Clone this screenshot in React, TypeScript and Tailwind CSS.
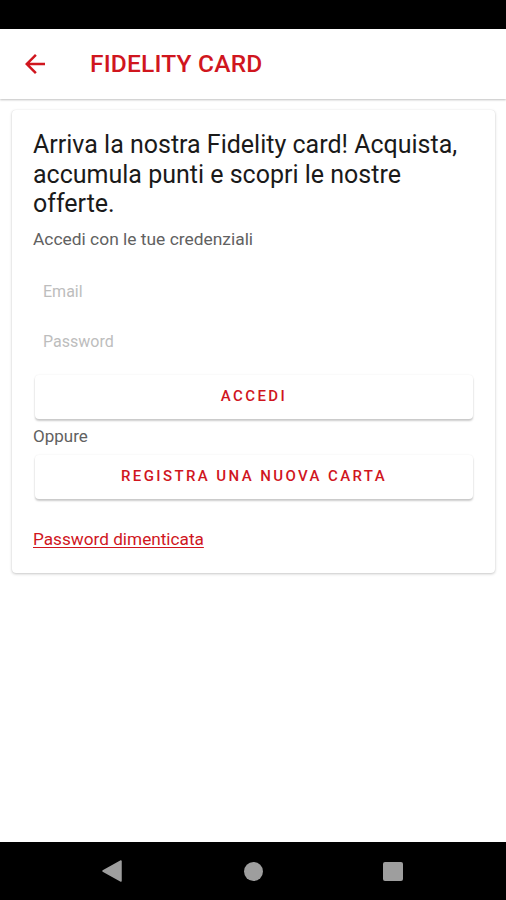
import React from "react";

const RED = "text-[#d0161e]";

export default function App() {
  return (
    <div className="w-[506px] h-[900px] flex flex-col bg-white overflow-hidden" style={{ fontFamily: "Roboto, 'Noto Sans', sans-serif" }}>
      <div className="h-[29px] bg-black shrink-0" />
      <header className="h-[70px] shrink-0 bg-white flex items-center shadow-[0_1px_2px_rgba(0,0,0,0.25)] z-10">
        <svg width="30" height="30" viewBox="0 0 24 24" className="ml-[20px] fill-[#d0161e]">
          <path d="M20 11H7.83l5.59-5.59L12 4l-8 8 8 8 1.41-1.41L7.83 13H20v-2z" />
        </svg>
        <h1 className={`ml-[40px] text-[24.5px] font-medium leading-none tracking-[0.2px] ${RED}`}>FIDELITY CARD</h1>
      </header>
      <main className="flex-1 pt-[11px] pl-[12px] pr-[11px]">
        <div className="rounded-[4px] bg-white shadow-[0_1px_3px_rgba(0,0,0,0.22),0_0_1px_rgba(0,0,0,0.1)] pt-[20px] pl-[21px] pr-[21px] pb-[23px]">
          <p className="text-[25px] leading-[29.5px] text-[#1a1a1a]">
            Arriva la nostra Fidelity card! Acquista, accumula punti e scopri le nostre offerte.
          </p>
          <p className="mt-[10px] text-[17.4px] leading-[20px] text-[#616161]">Accedi con le tue credenziali</p>
          <div className="mt-[18px] flex flex-col">
            <input
              type="email"
              placeholder="Email"
              className="h-[50px] pl-[10px] text-[16px] outline-none bg-transparent placeholder:text-[#bdbdbd]"
            />
            <input
              type="password"
              placeholder="Password"
              className="h-[50px] pl-[10px] text-[16px] outline-none bg-transparent placeholder:text-[#bdbdbd]"
            />
          </div>
          <button className={`block mt-[8px] ml-[2px] mr-[1px] w-[438px] h-[44px] rounded-[4px] bg-white shadow-[0_2px_2px_rgba(0,0,0,0.2),0_0_2px_rgba(0,0,0,0.08)] text-[15px] font-medium tracking-[2.4px] ${RED}`}>
            ACCEDI
          </button>
          <p className="mt-[7px] text-[17px] leading-[20px] text-[#616161]">Oppure</p>
          <button className={`block mt-[9px] ml-[2px] mr-[1px] w-[438px] h-[44px] rounded-[4px] bg-white shadow-[0_2px_2px_rgba(0,0,0,0.2),0_0_2px_rgba(0,0,0,0.08)] text-[15px] font-medium tracking-[2.4px] ${RED}`}>
            REGISTRA UNA NUOVA CARTA
          </button>
          <div className="mt-[30px] leading-[20px]">
            <a className={`text-[17.2px] leading-[20px] underline underline-offset-2 ${RED}`}>Password dimenticata</a>
          </div>
        </div>
      </main>
      <nav className="h-[58px] shrink-0 bg-black flex items-center relative">
        <svg width="20" height="22" viewBox="0 0 20 22" className="absolute left-[102px] top-[18px]">
          <path d="M19 1 L19 21 L1 11 Z" fill="#9e9e9e" stroke="#9e9e9e" strokeWidth="1.5" strokeLinejoin="round" />
        </svg>
        <div className="absolute left-[244px] top-[20px] w-[19px] h-[19px] rounded-full bg-[#9e9e9e]" />
        <div className="absolute left-[383px] top-[20px] w-[20px] h-[19px] rounded-[2px] bg-[#9e9e9e]" />
      </nav>
    </div>
  );
}
